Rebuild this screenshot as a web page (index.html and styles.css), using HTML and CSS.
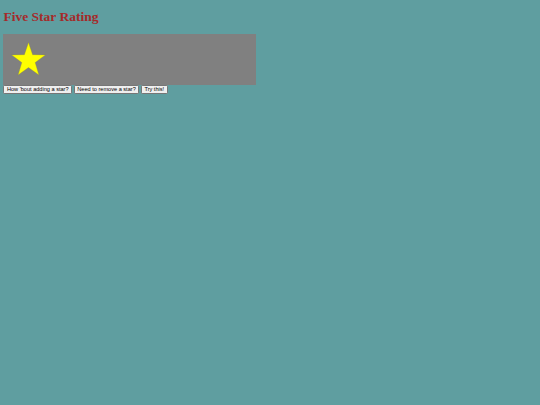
FILE: index.html
```html
<!DOCTYPE html>
<html>
<head>
<meta charset="utf-8">
<title>Five Star Rating</title>
<link rel="stylesheet" href="styles.css">
</head>
<body>
<h1 class="title">Five Star Rating</h1>
<div class="board">
  <svg class="star" width="35" height="34" viewBox="0 0 34 33">
    <polygon points="17,0.5 21,12.3 33.4,12.5 23.5,20 27.1,32 17,24.8 6.9,32 10.5,20 0.6,12.5 13,12.3" fill="#ffff00" stroke="#8a8a3a" stroke-width="0.3"/>
  </svg>
</div>
<div class="controls">
  <button class="btn">How 'bout adding a star?</button>
  <button class="btn">Need to remove a star?</button>
  <button class="btn">Try this!</button>
</div>
</body>
</html>
```
FILE: styles.css
```css
html, body {
  background: #5f9ea0;
}
body {
  margin: 0 3.4px;
  font-family: "Liberation Serif", serif;
}
.title {
  margin: 9px 0;
  font-family: "Liberation Serif", serif;
  font-weight: bold;
  font-size: 13.5px;
  color: #a52a2a;
}
.board {
  box-sizing: border-box;
  width: 253px;
  height: 50.6px;
  padding: 8px 8px;
  background: #808080;
}
.star {
  display: block;
}
.controls {
  display: flex;
  gap: 1.7px;
}
.btn {
  font-family: "Liberation Sans", Arial, sans-serif;
  font-size: 5.6px;
  line-height: 6.4px;
  padding: 0.4px 2.5px;
  margin: 0;
  border: 0.8px solid #767676;
  border-radius: 1.2px;
  background: #efefef;
  color: #000;
}
```
